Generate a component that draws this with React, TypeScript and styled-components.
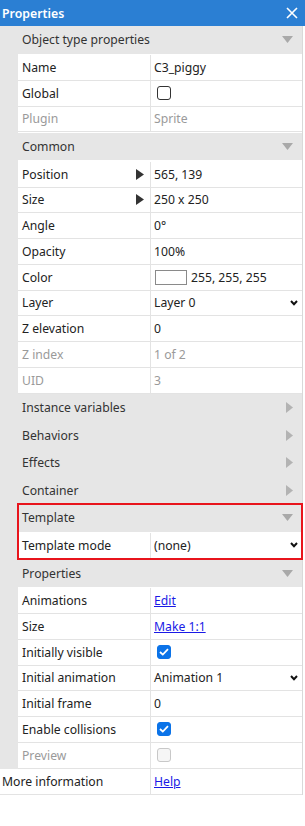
import React from "react"
import styled, { createGlobalStyle } from "styled-components"

const GlobalStyle = createGlobalStyle`
	html, body {
		margin: 0;
		padding: 0;
		background: #ffffff;
	}
	body {
		font-family: "Noto Sans", "Open Sans", sans-serif;
		font-size: 12.2px;
		color: #222;
	}
`

const Panel = styled.div`
	width: 305px;
	height: 826px;
	display: flex;
	flex-direction: column;
	background: #fff;
	overflow: hidden;
`

const TitleBar = styled.div`
	height: 26px;
	flex: 0 0 26px;
	display: flex;
	align-items: center;
	justify-content: space-between;
	padding: 0 6px 0 2px;
	box-sizing: border-box;
	background: #2b7fd3;
	color: #fff;
	font-size: 12.3px;
	font-weight: 600;
`

const CloseButton = styled.span`
	display: flex;
	align-items: center;
	justify-content: center;
	width: 14px;
	height: 14px;
`

const Grid = styled.div`
	width: 302px;
	border-right: 1px solid #d9d9d9;
	display: flex;
	flex-direction: column;
`

const Section = styled.div`
	display: flex;
	flex-direction: column;
	background: #e6e6e6;
	padding-left: 18px;
`

const Group = styled.div<{ $marked?: boolean }>`
	display: flex;
	flex-direction: column;
	outline: ${(p) => (p.$marked ? "2px solid #e8141c" : "none")};
	outline-offset: -1px;
	position: relative;
`

const Header = styled.div`
	height: 27.5px;
	display: flex;
	align-items: center;
	justify-content: space-between;
	padding: 0 9px 0 4px;
	color: #333;
`

const Rows = styled.div`
	display: flex;
	flex-direction: column;
	background: #fff;
	padding: 1.5px 0 0.5px;
`

const Row = styled.div<{ $outer?: boolean }>`
	height: 25.75px;
	display: grid;
	grid-template-columns: ${(p) => (p.$outer ? "151px" : "133px")} 1fr;
	border-bottom: 1px solid #e3e3e3;
	box-sizing: border-box;
	background: #fff;
`

const Label = styled.div<{ $disabled?: boolean; $outer?: boolean }>`
	display: flex;
	align-items: center;
	justify-content: space-between;
	padding: 0 6px 0 ${(p) => (p.$outer ? "2px" : "4px")};
	border-right: 1px solid #e3e3e3;
	color: ${(p) => (p.$disabled ? "#9a9a9a" : "#222")};
	white-space: nowrap;
`

const Value = styled.div<{ $disabled?: boolean }>`
	display: flex;
	align-items: center;
	gap: 4px;
	padding: 0 4px 0 3px;
	color: ${(p) => (p.$disabled ? "#9a9a9a" : "#222")};
	white-space: nowrap;
`

const Select = styled.div`
	flex: 1;
	display: flex;
	align-items: center;
	justify-content: space-between;
`

const Link = styled.a`
	color: #1a1ae6;
	text-decoration: underline;
	cursor: pointer;
`

const Swatch = styled.span`
	width: 32px;
	height: 15px;
	margin-left: 1px;
	border: 1px solid #8a8a8a;
	background: #fff;
	box-sizing: border-box;
`

const Box = styled.span<{ $checked?: boolean; $disabled?: boolean }>`
	width: 14px;
	height: 14px;
	margin-left: 3px;
	box-sizing: border-box;
	border-radius: 3px;
	display: flex;
	align-items: center;
	justify-content: center;
	border: 1px solid
		${(p) => (p.$checked ? "#0b73e8" : p.$disabled ? "#c8c8c8" : "#333")};
	background: ${(p) => (p.$checked ? "#0b73e8" : p.$disabled ? "#f6f6f6" : "#fff")};
`

const TriDown = () => (
	<svg width="11" height="7" viewBox="0 0 11 7">
		<polygon points="0,0 11,0 5.5,7" fill="#a9a9a9" />
	</svg>
)

const TriRight = () => (
	<svg width="7" height="11" viewBox="0 0 7 11">
		<polygon points="0,0 7,5.5 0,11" fill="#b3b3b3" />
	</svg>
)

const Expander = () => (
	<svg width="8" height="11" viewBox="0 0 8 11">
		<polygon points="0,0 8,5.5 0,11" fill="#333" />
	</svg>
)

const Chevron = () => (
	<svg width="8" height="6" viewBox="0 0 8 6">
		<polyline points="1,1 4,4.2 7,1" fill="none" stroke="#111" strokeWidth="2" />
	</svg>
)

const Check = () => (
	<svg width="10" height="8" viewBox="0 0 10 8">
		<polyline points="1,4 3.8,6.6 9,1.2" fill="none" stroke="#fff" strokeWidth="1.8" />
	</svg>
)

type Prop = {
	label: string
	value?: React.ReactNode
	disabled?: boolean
	expand?: boolean
}

const PropRow = ({ label, value, disabled, expand }: Prop) => (
	<Row>
		<Label $disabled={disabled}>
			{label}
			{expand && <Expander />}
		</Label>
		<Value $disabled={disabled}>{value}</Value>
	</Row>
)

const Dropdown = ({ text }: { text: string }) => (
	<Select>
		{text}
		<Chevron />
	</Select>
)

const SectionHeader = ({ title, open }: { title: string; open?: boolean }) => (
	<Header>
		{title}
		{open ? <TriDown /> : <TriRight />}
	</Header>
)

export default function App() {
	return (
		<>
			<GlobalStyle />
			<Panel>
				<TitleBar>
					Properties
					<CloseButton>
						<svg width="12" height="12" viewBox="0 0 12 12">
							<path d="M1 1 L11 11 M11 1 L1 11" stroke="#fff" strokeWidth="1.6" />
						</svg>
					</CloseButton>
				</TitleBar>
				<Grid>
					<Section>
						<SectionHeader title="Object type properties" open />
						<Rows>
							<PropRow label="Name" value="C3_piggy" />
							<PropRow label="Global" value={<Box />} />
							<PropRow label="Plugin" value="Sprite" disabled />
						</Rows>
						<SectionHeader title="Common" open />
						<Rows>
							<PropRow label="Position" value="565, 139" expand />
							<PropRow label="Size" value="250 x 250" expand />
							<PropRow label="Angle" value="0°" />
							<PropRow label="Opacity" value="100%" />
							<PropRow
								label="Color"
								value={
									<>
										<Swatch />
										255, 255, 255
									</>
								}
							/>
							<PropRow label="Layer" value={<Dropdown text="Layer 0" />} />
							<PropRow label="Z elevation" value="0" />
							<PropRow label="Z index" value="1 of 2" disabled />
							<PropRow label="UID" value="3" disabled />
						</Rows>
						<SectionHeader title="Instance variables" />
						<SectionHeader title="Behaviors" />
						<SectionHeader title="Effects" />
						<SectionHeader title="Container" />
						<Group $marked>
							<SectionHeader title="Template" open />
							<Rows>
								<PropRow label="Template mode" value={<Dropdown text="(none)" />} />
							</Rows>
						</Group>
						<SectionHeader title="Properties" open />
						<Rows>
							<PropRow label="Animations" value={<Link>Edit</Link>} />
							<PropRow label="Size" value={<Link>Make 1:1</Link>} />
							<PropRow
								label="Initially visible"
								value={
									<Box $checked>
										<Check />
									</Box>
								}
							/>
							<PropRow label="Initial animation" value={<Dropdown text="Animation 1" />} />
							<PropRow label="Initial frame" value="0" />
							<PropRow
								label="Enable collisions"
								value={
									<Box $checked>
										<Check />
									</Box>
								}
							/>
							<PropRow label="Preview" value={<Box $disabled />} disabled />
						</Rows>
					</Section>
					<Row $outer>
						<Label $outer>More information</Label>
						<Value>
							<Link>Help</Link>
						</Value>
					</Row>
				</Grid>
			</Panel>
		</>
	)
}
